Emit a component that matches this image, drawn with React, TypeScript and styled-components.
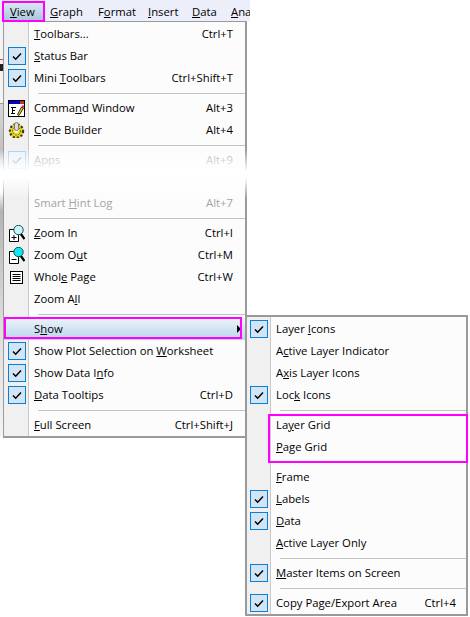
import React from "react";
import styled, { createGlobalStyle } from "styled-components";

type Item =
  | { kind: "sep" }
  | { kind: "gap" }
  | {
      kind?: "row";
      label: React.ReactNode;
      shortcut?: string;
      checked?: boolean;
      disabled?: boolean;
      hot?: boolean;
      icon?: React.ReactNode;
    };

const GlobalStyle = createGlobalStyle`
  html, body { margin: 0; padding: 0; background: #fff; }
  body { font-family: "Open Sans", "Noto Sans", "Liberation Sans", sans-serif; font-size: 11.3px; color: #000; }
`;

const Stage = styled.div`
  position: relative;
  width: 470px;
  height: 617px;
  overflow: hidden;
`;

const MenuBar = styled.div`
  display: flex;
  width: 250px;
  height: 21px;
  padding: 3px 0 0 3px;
  box-sizing: border-box;
  background: #eceefa;
  overflow: hidden;
`;

const BarItem = styled.div<{ $w: number; $active?: boolean }>`
  flex: 0 0 ${(p) => p.$w}px;
  margin-right: ${(p) => (p.$active ? 7 : 0)}px;
  padding-left: ${(p) => (p.$active ? 7 : 0)}px;
  box-sizing: border-box;
  line-height: 18px;
  white-space: nowrap;
  background: ${(p) => (p.$active ? "linear-gradient(#dde9f4, #a6c4da)" : "transparent")};
`;

const MainMenu = styled.div`
  position: relative;
  width: 244px;
  height: 417px;
  margin-left: 3px;
  box-sizing: border-box;
  border: solid #9a9a9a;
  border-width: 1px 2px 2px 1px;
  padding-top: 1px;
  background: linear-gradient(90deg, #f0f0f0 0, #f0f0f0 24px, #c9c9c9 24px, #c9c9c9 25px, #fcfcfc 25px);
`;

const SubMenu = styled.div`
  position: absolute;
  left: 245px;
  top: 315px;
  width: 223px;
  height: 301px;
  box-sizing: border-box;
  border: 2px solid #9a9a9a;
  padding-top: 1px;
  background: linear-gradient(90deg, #f0f0f0 0, #f0f0f0 23px, #c9c9c9 23px, #c9c9c9 24px, #fcfcfc 24px);
`;

const Row = styled.div<{ $disabled?: boolean; $hot?: boolean; $pad: number; $right: number }>`
  position: relative;
  display: flex;
  align-items: center;
  height: 22px;
  box-sizing: border-box;
  padding: 0 ${(p) => p.$right}px 2px ${(p) => p.$pad}px;
  white-space: nowrap;
  color: ${(p) => (p.$disabled ? "#a4a4a4" : "#000")};
  background: ${(p) => (p.$hot ? "linear-gradient(#edf4fb, #b9d4eb)" : "transparent")};
`;

const Label = styled.span`
  flex: 1;
`;

const CheckBox = styled.span<{ $left: number; $disabled?: boolean }>`
  position: absolute;
  left: ${(p) => p.$left}px;
  top: 2px;
  width: 18px;
  height: 18px;
  box-sizing: border-box;
  display: flex;
  align-items: center;
  justify-content: center;
  border: 1px solid ${(p) => (p.$disabled ? "#a6cdee" : "#0a7fd6")};
  background: ${(p) => (p.$disabled ? "#eaf3fb" : "#d2e5f6")};
`;

const IconSlot = styled.span<{ $left: number }>`
  position: absolute;
  left: ${(p) => p.$left}px;
  top: 2px;
  width: 17px;
  height: 18px;
  display: flex;
  align-items: center;
  justify-content: center;
`;

const Separator = styled.div<{ $left: number }>`
  height: 1px;
  margin: 4px 0 3px ${(p) => p.$left}px;
  background: #c4c4c4;
`;

const HiddenGap = styled.div`
  height: 21px;
`;

const Arrow = styled.span`
  position: absolute;
  right: 4px;
  top: 7px;
  width: 0;
  height: 0;
  border-left: 4px solid #000;
  border-top: 4px solid transparent;
  border-bottom: 4px solid transparent;
`;

/* the screenshot is cut and faded in the middle of the menu */
const Fade = styled.div`
  position: absolute;
  left: -4px;
  top: 127px;
  width: 254px;
  height: 50px;
  background: linear-gradient(rgba(255, 255, 255, 0), #fff 45%, #fff 58%, rgba(255, 255, 255, 0));
`;

/* sliver of the window behind the menu, left of its border */
const BehindStrip = styled.div`
  position: absolute;
  left: 0;
  top: 21px;
  width: 3px;
  height: 416px;
  background: linear-gradient(
    #f4f4f4 0,
    #f4f4f4 38px,
    #e04030 38px,
    #e04030 39px,
    #f4f4f4 39px,
    #f4f4f4 43px,
    #222 43px,
    #222 50px,
    #f4f4f4 50px,
    #f4f4f4 82px,
    #9a9a9a 82px,
    #9a9a9a 83px,
    #d8d8d8 83px,
    #c0c0c0 130px,
    #fff 155px,
    #fff 170px,
    #b4b4b4 190px,
    #dcdcdc 300px,
    #f4f4f4 416px
  );
`;

const Highlight = styled.div`
  position: absolute;
  box-sizing: border-box;
  border: 2px solid #ff00ff;
`;

const ViewMark = styled(Highlight)`
  left: 2px;
  top: 1px;
  width: 43px;
  height: 21px;
`;

const ShowMark = styled(Highlight)`
  left: 4px;
  top: 317px;
  width: 238px;
  height: 22px;
`;

const GridMark = styled(Highlight)`
  left: 268px;
  top: 414px;
  width: 200px;
  height: 49px;
`;

const Tick = ({ color = "#000" }: { color?: string }) => (
  <svg width="10" height="9" viewBox="0 0 10 9">
    <path d="M1 4.500 L3.700 7.200 L9 1.500" fill="none" stroke={color} strokeWidth="1.500" />
  </svg>
);

const CommandIcon = () => (
  <svg width="17" height="17" viewBox="0 0 17 17">
    <rect x="0.500" y="0.500" width="16" height="16" fill="#fff" stroke="#000" />
    <rect x="1" y="1" width="15" height="3" fill="#0000c8" />
    <rect x="12" y="1" width="4" height="3" fill="#d03020" />
    <path d="M3 7.500h5M4 10.500h3M3 13.500h4M4.500 7v7" stroke="#000" fill="none" />
    <path d="M9.500 14.500 L13.500 7 L15.500 8 L11 15.500 Z" fill="#e8d020" stroke="#000" strokeWidth="0.800" />
    <path d="M13.500 7 L14.500 5 L16.500 6 L15.500 8 Z" fill="#e03020" />
  </svg>
);

const GearIcon = () => (
  <svg width="17" height="16" viewBox="0 0 17 16">
    <circle cx="8.500" cy="9" r="4.800" fill="none" stroke="#e6d81c" strokeWidth="5" />
    <circle cx="8.500" cy="9" r="6.600" fill="none" stroke="#333" strokeWidth="2.200" strokeDasharray="2 2" />
    <circle cx="8.500" cy="9" r="4" fill="none" stroke="#554f10" strokeWidth="1" strokeDasharray="1.500 1.500" />
    <rect x="6.500" y="0.500" width="4" height="8" rx="2" fill="#dcdce4" stroke="#666" strokeWidth="0.800" />
  </svg>
);

const ZoomIcon = ({ plus, fill }: { plus?: boolean; fill: string }) => (
  <svg width="17" height="17" viewBox="0 0 17 17">
    <path d="M1.500 4.500 H7 V8 H10.500 V16.500 H1.500 Z" fill="#fff" stroke="#000" />
    <path d="M3.500 12.500 H8.500" stroke="#000" />
    {plus && <path d="M6 10 V15" stroke="#000" />}
    <path d="M12.500 8.500 L16.500 14" stroke="#000" strokeWidth="2.200" />
    <circle cx="10.500" cy="5" r="4.700" fill={fill} stroke="#16505c" />
  </svg>
);

const PageIcon = () => (
  <svg width="13" height="13" viewBox="0 0 13 13">
    <rect x="0.500" y="0.500" width="12" height="12" fill="#fff" stroke="#000" />
    <path d="M2.500 3.500h8M2.500 5.500h8M2.500 7.500h8M2.500 9.500h8" stroke="#000" />
  </svg>
);

const mainItems: Item[] = [
  { label: <><u>T</u>oolbars...</>, shortcut: "Ctrl+T" },
  { label: <><u>S</u>tatus Bar</>, checked: true },
  { label: <>Mini <u>T</u>oolbars</>, shortcut: "Ctrl+Shift+T", checked: true },
  { kind: "sep" },
  { label: <>Comma<u>n</u>d Window</>, shortcut: "Alt+3", icon: <CommandIcon /> },
  { label: <><u>C</u>ode Builder</>, shortcut: "Alt+4", icon: <GearIcon /> },
  { kind: "sep" },
  { label: <><u>A</u>pps</>, shortcut: "Alt+9", checked: true, disabled: true },
  { kind: "gap" },
  { label: <>Smart <u>H</u>int Log</>, shortcut: "Alt+7", disabled: true },
  { kind: "sep" },
  { label: <><u>Z</u>oom In</>, shortcut: "Ctrl+I", icon: <ZoomIcon plus fill="#c4f6f8" /> },
  { label: <>Zoom O<u>u</u>t</>, shortcut: "Ctrl+M", icon: <ZoomIcon fill="#10e8f0" /> },
  { label: <>Whol<u>e</u> Page</>, shortcut: "Ctrl+W", icon: <PageIcon /> },
  { label: <>Zoom A<u>l</u>l</> },
  { kind: "sep" },
  { label: <>S<u>h</u>ow</>, hot: true },
  { label: <>Show Plot Selection on <u>W</u>orksheet</>, checked: true },
  { label: <>Show Data I<u>n</u>fo</>, checked: true },
  { label: <><u>D</u>ata Tooltips</>, shortcut: "Ctrl+D", checked: true },
  { kind: "sep" },
  { label: <><u>F</u>ull Screen</>, shortcut: "Ctrl+Shift+J" },
];

const subItems: Item[] = [
  { label: <>Layer <u>I</u>cons</>, checked: true },
  { label: <>A<u>c</u>tive Layer Indicator</> },
  { label: <>A<u>x</u>is Layer Icons</> },
  { label: <>Loc<u>k</u> Icons</>, checked: true },
  { kind: "sep" },
  { label: <>La<u>y</u>er Grid</> },
  { label: <><u>P</u>age Grid</> },
  { kind: "sep" },
  { label: <><u>F</u>rame</> },
  { label: <><u>L</u>abels</>, checked: true },
  { label: <><u>D</u>ata</>, checked: true },
  { label: <><u>A</u>ctive Layer Only</> },
  { kind: "sep" },
  { label: <><u>M</u>aster Items on Screen</>, checked: true },
  { kind: "sep" },
  { label: "Copy Page/Export Area", shortcut: "Ctrl+4", checked: true },
];

const MenuRows = ({ items, pad, right, gut }: { items: Item[]; pad: number; right: number; gut: number }) => (
  <>
    {items.map((it, i) => {
      if (it.kind === "sep") return <Separator key={i} $left={pad + 4} />;
      if (it.kind === "gap") return <HiddenGap key={i} />;
      return (
        <Row key={i} $disabled={it.disabled} $hot={it.hot} $pad={pad} $right={right}>
          {it.checked && (
            <CheckBox $left={gut} $disabled={it.disabled}>
              <Tick color={it.disabled ? "#a8a8a8" : "#000"} />
            </CheckBox>
          )}
          {it.icon && <IconSlot $left={gut}>{it.icon}</IconSlot>}
          <Label>{it.label}</Label>
          {it.shortcut && <span>{it.shortcut}</span>}
          {it.hot && <Arrow />}
        </Row>
      );
    })}
  </>
);

export default function App() {
  return (
    <Stage>
      <GlobalStyle />
      <BehindStrip />
      <MenuBar>
        <BarItem $w={40} $active><u>V</u>iew</BarItem>
        <BarItem $w={48}><u>G</u>raph</BarItem>
        <BarItem $w={50}>F<u>o</u>rmat</BarItem>
        <BarItem $w={44}><u>I</u>nsert</BarItem>
        <BarItem $w={39}><u>D</u>ata</BarItem>
        <BarItem $w={20}><u>A</u>na</BarItem>
      </MenuBar>
      <MainMenu>
        <MenuRows items={mainItems} pad={30} right={12} gut={4} />
        <Fade />
      </MainMenu>
      <SubMenu>
        <MenuRows items={subItems} pad={29} right={10} gut={3} />
      </SubMenu>
      <ViewMark />
      <ShowMark />
      <GridMark />
    </Stage>
  );
}
